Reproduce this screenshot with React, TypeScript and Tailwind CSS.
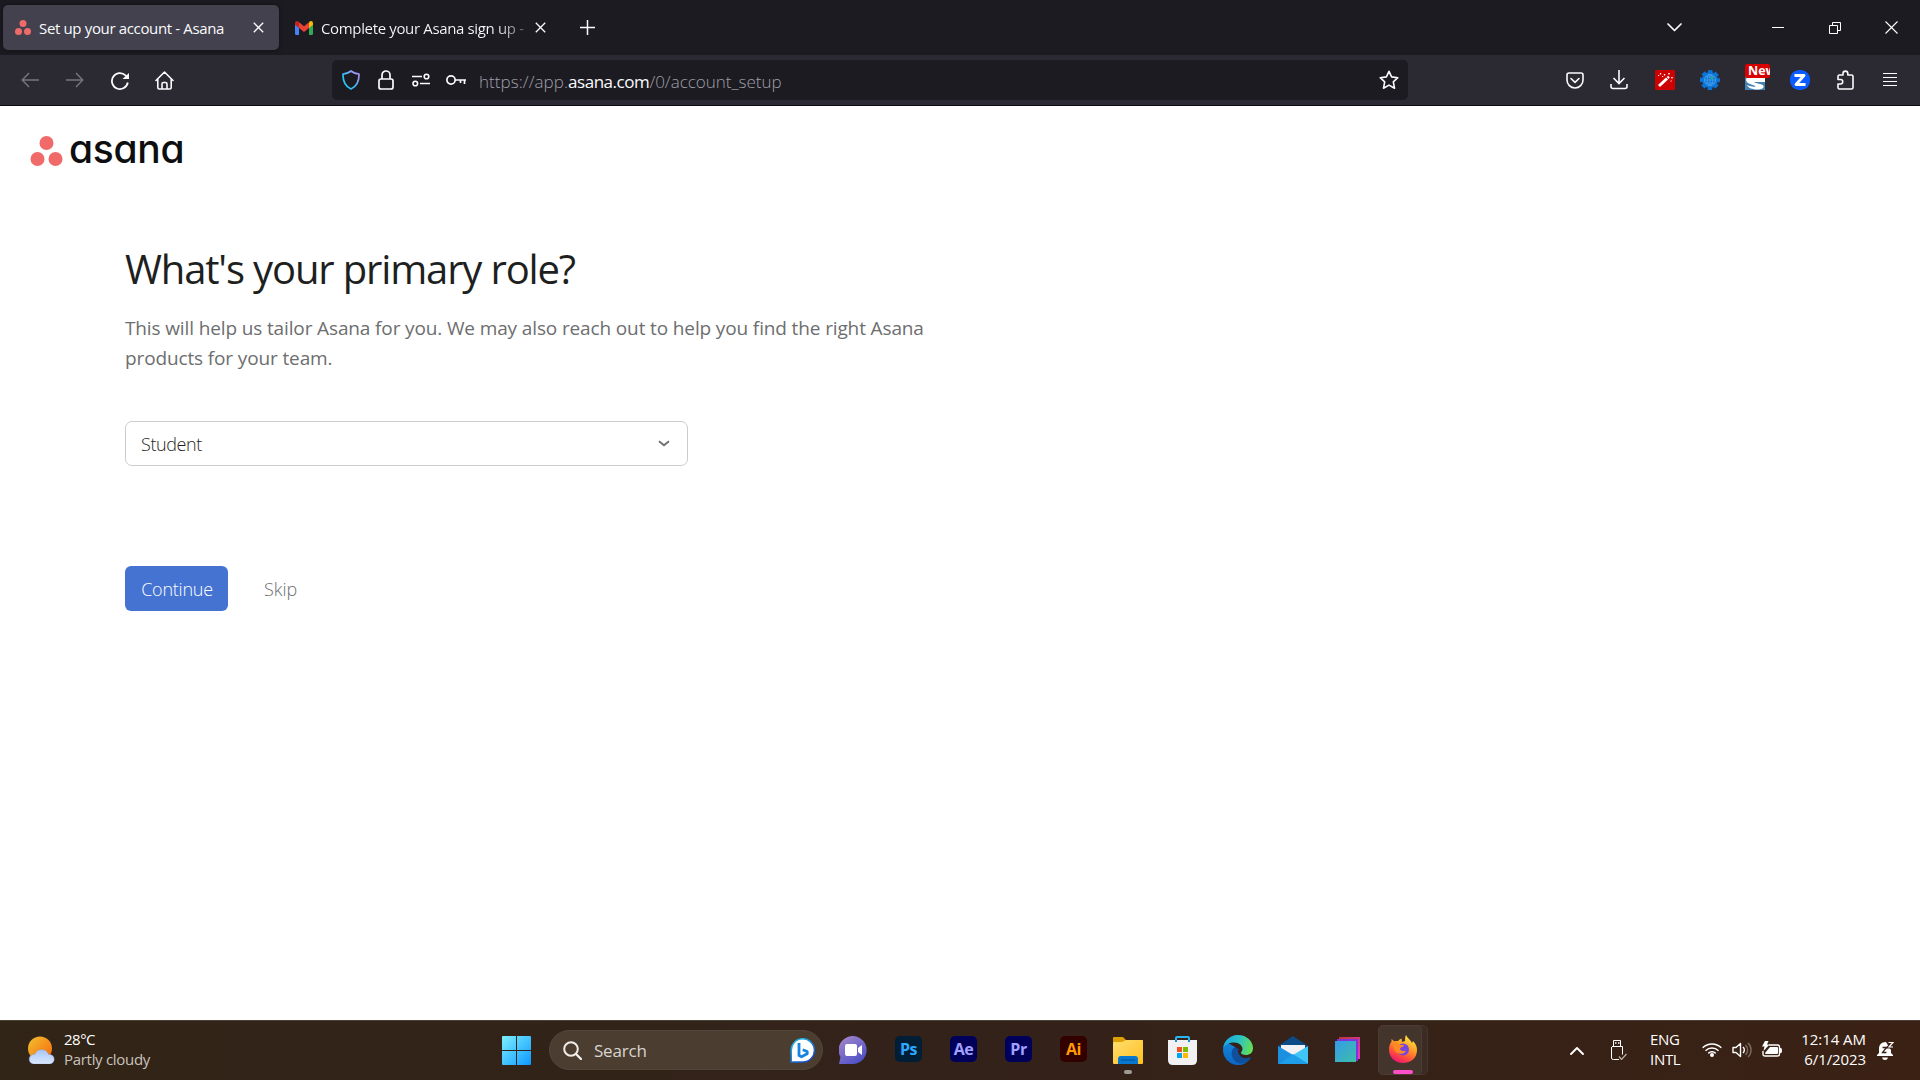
import React from "react";

type IconProps = { w: number; h: number; vb?: string; className?: string; children: React.ReactNode };

function Icon({ w, h, vb, className = "", children }: IconProps) {
  return (
    <svg width={w} height={h} viewBox={vb ?? `0 0 ${w} ${h}`} fill="none" className={`block shrink-0 ${className}`}>
      {children}
    </svg>
  );
}

function AsanaDots({ w, h }: { w: number; h: number }) {
  return (
    <Icon w={w} h={h} vb="0 0 32 30">
      <circle cx="16" cy="7" r="7" fill="#f06a6a" />
      <circle cx="7" cy="23" r="7" fill="#f06a6a" />
      <circle cx="25" cy="23" r="7" fill="#f06a6a" />
    </Icon>
  );
}

function CloseX() {
  return (
    <Icon w={11} h={11}>
      <path d="M.8.8l9.4 9.4M10.2.8L.8 10.2" stroke="#fbfbfe" strokeWidth="1.3" />
    </Icon>
  );
}

function TabStrip() {
  return (
    <div className="flex h-[55px] items-start bg-[#1c1b22] text-[#fbfbfe]">
      <div className="ml-[3px] mt-[5px] flex h-[45px] w-[276px] items-center rounded-[5px] bg-[#42414d] pl-3 pr-[15px] shadow-[0_0_4px_rgba(0,0,0,0.5)]">
        <AsanaDots w={16} h={15} />
        <span className="ml-2 mt-[2px] whitespace-nowrap text-[15px] tracking-[-0.35px]">Set up your account - Asana</span>
        <div className="ml-auto"><CloseX /></div>
      </div>
      <div className="mt-[5px] flex h-[45px] w-[267px] items-center pl-4">
        <Icon w={18} h={14}>
          <path d="M0 2v10.5Q0 14 1.500 14H4V6z" fill="#4285f4" />
          <path d="M18 2v10.500Q18 14 16.500 14H14V6z" fill="#34a853" />
          <path d="M4 1.300l5 4 5-4V7L9 11 4 7z" fill="#ea4335" />
          <path d="M0 2.200Q0 0 2 0q1 0 2 1.200V7L0 3.800z" fill="#c5221f" />
          <path d="M18 2.200Q18 0 16 0q-1 0-2 1.200V7l4-3.200z" fill="#fbbc04" />
        </Icon>
        <span className="ml-2 mt-[2px] w-[206px] overflow-hidden whitespace-nowrap bg-gradient-to-r from-[#fbfbfe] from-85% to-[#55545c] bg-clip-text text-[15px] tracking-[-0.35px] text-transparent">
          Complete your Asana sign up -
        </span>
        <div className="ml-2"><CloseX /></div>
      </div>
      <Icon w={15} h={15} className="ml-[34px] mt-5">
        <path d="M7.500 0v15M0 7.500h15" stroke="#fbfbfe" strokeWidth="1.500" />
      </Icon>
      <div className="ml-auto mr-[22px] flex h-[55px] items-center">
        <Icon w={15} h={9} className="mr-[90px]">
          <path d="M1 1l6.500 6.500L14 1" stroke="#fbfbfe" strokeWidth="1.700" strokeLinecap="round" strokeLinejoin="round" />
        </Icon>
        <div className="mr-[45px] h-px w-3 bg-white" />
        <Icon w={12} h={12} className="mr-11">
          <path d="M.5 3.500h8v8h-8zM3.500 3.500v-3h8v8h-3" stroke="#fff" />
        </Icon>
        <Icon w={13} h={13}>
          <path d="M.5.5l12 12M12.500.5l-12 12" stroke="#fff" strokeWidth="1.100" />
        </Icon>
      </div>
    </div>
  );
}

function Toolbar() {
  const s = "#fbfbfe";
  return (
    <div className="flex h-[51px] items-center border-b border-[#0c0c0d] bg-[#2b2a33]">
      <div className="flex w-[332px] items-center pl-[21px]">
        <Icon w={18} h={16}><path d="M18 8H1.500M8 1L1.200 8 8 15" stroke="#77767e" strokeWidth="1.400" /></Icon>
        <Icon w={18} h={16} className="ml-[27px]"><path d="M0 8h16.500M10 1l6.800 7-6.800 7" stroke="#77767e" strokeWidth="1.400" /></Icon>
        <Icon w={18} h={18} className="ml-[27px] mt-px">
          <path d="M16.800 10.500A8 8 0 1 1 14.500 3.300L16 5" stroke={s} strokeWidth="1.800" />
          <path d="M18 1v6h-6.500z" fill={s} />
        </Icon>
        <Icon w={19} h={19} className="ml-[26px]">
          <path d="M1 9.500L9.500 1 18 9.500M2.800 8v8.500q0 1.500 1.500 1.500h10.400q1.500 0 1.500-1.500V8M7 18v-5q0-1.500 1.500-1.500h2q1.500 0 1.500 1.500v5" stroke={s} strokeWidth="1.600" strokeLinecap="round" strokeLinejoin="round" />
        </Icon>
      </div>
      <div className="flex h-10 w-[1076px] items-center rounded-[5px] bg-[#1c1b22] pl-[10px] pr-[9px]">
        <Icon w={18} h={20}>
          <defs>
            <linearGradient id="shield" x1="0" y1="1" x2="1" y2="0"><stop offset=".35" stopColor="#26c5f5" /><stop offset=".9" stopColor="#aa90f0" /></linearGradient>
          </defs>
          <path d="M9 1c2 1.700 5 2.500 8 3 .2 7-2 12.500-8 15C3 16.500.8 11 1 4c3-.5 6-1.300 8-3z" stroke="url(#shield)" strokeWidth="1.700" strokeLinejoin="round" />
        </Icon>
        <Icon w={16} h={20} className="ml-[18px]">
          <rect x="1" y="9" width="14" height="10" rx="2" stroke={s} strokeWidth="1.700" />
          <path d="M4 9V5a4 4 0 0 1 8 0v4" stroke={s} strokeWidth="1.700" />
        </Icon>
        <Icon w={18} h={14} className="ml-[18px]">
          <path d="M0 3.500h10M8 10.500h10" stroke={s} strokeWidth="1.700" />
          <circle cx="14.500" cy="3.500" r="2.300" stroke={s} strokeWidth="1.600" />
          <circle cx="3.300" cy="10.500" r="2.300" stroke={s} strokeWidth="1.600" />
        </Icon>
        <Icon w={20} h={12} className="ml-4">
          <circle cx="5" cy="6" r="4.100" stroke={s} strokeWidth="1.700" />
          <path d="M9 6h11M18.500 6v4M14.500 6v3" stroke={s} strokeWidth="1.700" />
        </Icon>
        <span className="ml-[13px] mt-[3px] flex whitespace-nowrap text-[17px] font-light text-[#9f9fa6]">
          <span className="tracking-[0.05px]">https://app.</span>
          <span className="font-normal tracking-[-0.45px] text-[#fbfbfe]">asana.com</span>
          <span>/0/account_setup</span>
        </span>
        <Icon w={20} h={20} className="ml-auto">
          <path d="M10 1.300l2.600 5.600 6.200.8-4.500 4.200 1.200 6.300-5.500-3.100-5.500 3.100 1.200-6.300L1.200 7.700l6.200-.8z" stroke={s} strokeWidth="1.600" strokeLinejoin="round" />
        </Icon>
      </div>
      <div className="ml-auto mr-[22px] flex items-center">
        <Icon w={18} h={17}>
          <path d="M3 1h12q2 0 2 2v5a8 8 0 0 1-16 0V3q0-2 2-2z" stroke={s} strokeWidth="1.600" />
          <path d="M5 6.500l4 3.800 4-3.800" stroke={s} strokeWidth="1.600" strokeLinecap="round" strokeLinejoin="round" />
        </Icon>
        <Icon w={18} h={20} className="ml-[26px]">
          <path d="M9 0v13M3.500 8L9 13.500 14.500 8M1 14v2.500q0 2 2 2h12q2 0 2-2V14" stroke={s} strokeWidth="1.600" />
        </Icon>
        <Icon w={20} h={20} className="ml-[27px]">
          <rect width="20" height="20" rx="1" fill="#cf0000" />
          <path d="M4 16L12 8.500" stroke="#fff" strokeWidth="3" />
          <path d="M12.500 8l1.500-1.400" stroke="#fff" strokeWidth="2.400" />
          <path d="M5.500 3v1.500M4.800 3.700h1.500M9.500 4v1.500M8.800 4.700h1.500M14 3v1.500M13.200 3.700h1.500M17 7v1.500M16.200 7.700h1.500M3 5.500h1.200M15.500 11h1.200M7 6.500h1.200" stroke="#fff" strokeWidth=".9" />
        </Icon>
        <Icon w={20} h={20} className="ml-[25px]">
          <circle cx="10" cy="10" r="8" fill="#0b74d8" />
          <circle cx="10" cy="10" r="8.200" stroke="#0b74d8" strokeWidth="3.600" strokeDasharray="4.200 2.240" strokeDashoffset="2.100" />
          <circle cx="10" cy="10" r="5.500" stroke="#4aa3ec" strokeWidth=".9" />
          <path d="M4.500 10h11M10 4.500v11M5.500 7h9M5.500 13h9" stroke="#4aa3ec" strokeWidth=".7" />
          <ellipse cx="10" cy="10" rx="2.800" ry="5.500" stroke="#4aa3ec" strokeWidth=".7" />
          <circle cx="12" cy="8" r="1.200" fill="#23b65c" />
        </Icon>
        <div className="relative ml-[25px] h-[20px] w-5">
          <Icon w={20} h={20}>
            <rect width="20" height="20" fill="#4583b5" />
            <path d="M2 7h18v5H9c1 2 8 1 9.500 4 .7 2-2 3.500-6 3.500C8 19.500 3 18 2 15c3 1.500 7 2 8.500 1.500C11 15 2 15 1 10z" fill="#fff" />
          </Icon>
          <span className="absolute -top-[6px] left-0 h-[14px] w-[25px] overflow-hidden rounded-[2px] bg-[#d90000] pl-[3px] text-[12.500px] font-bold leading-[13px] text-white">New</span>
        </div>
        <span className="ml-[25px] flex h-5 w-5 items-center justify-center rounded-[9px] bg-[#0b5cff]">
          <Icon w={12} h={12}><path d="M.5 1.500h9.500L2 10.500h9.500" stroke="#fff" strokeWidth="2.800" strokeLinejoin="round" /></Icon>
        </span>
        <Icon w={17} h={20} className="ml-[27px]">
          <path d="M1 8V6.500q0-1.500 1.500-1.500H6V3.500a2.400 2.400 0 0 1 4.800 0V5H14.500q1.500 0 1.500 1.500v11q0 1.500-1.500 1.500h-12Q1 19 1 17.500V14h2.500a2 2 0 0 0 0-4.500H1z" stroke={s} strokeWidth="1.600" strokeLinejoin="round" />
        </Icon>
        <Icon w={16} h={14} className="ml-7">
          <path d="M1 .5h14M1 4.500h14M1 8.500h14M1 12.500h14" stroke={s} strokeWidth="1.100" />
        </Icon>
      </div>
    </div>
  );
}

function Setup() {
  return (
    <main className="flex h-[914px] flex-col bg-white">
      <div className="ml-[30px] mt-[30px] flex h-[30px] items-center">
        <AsanaDots w={33} h={30} />
        <span className="ml-[6px] mt-[-5px] text-[39px] font-medium leading-[39px] tracking-[-0.3px] text-[#0d0e10] [font-family:Inter,sans-serif] [font-feature-settings:'cv11']">asana</span>
      </div>
      <div className="ml-[125px] flex flex-col items-start">
        <h1 className="mt-[75px] h-14 whitespace-nowrap text-[40px] leading-[56px] tracking-[-1.15px] text-[#1e1f21]">What&apos;s your primary role?</h1>
        <p className="mt-[16px] whitespace-nowrap text-[19px] leading-[30px] tracking-[-0.13px] text-[#6d6e6f]">
          This will help us tailor Asana for you. We may also reach out to help you find the right Asana
          <br />
          products for your team.
        </p>
        <div className="mt-[48px] flex h-[45px] w-[563px] items-center justify-between rounded-[7px] border border-[#cfcbcb] pl-[15px] pr-[17px]">
          <span className="mt-[2px] text-[18px] font-light tracking-[-0.4px] text-[#1e1f21]">Student</span>
          <Icon w={12} h={7}><path d="M1 1.300l5 4 5-4" stroke="#6d6e6f" strokeWidth="1.800" /></Icon>
        </div>
        <div className="mt-[100px] flex h-[45px] items-center text-[18px] font-light">
          <button className="h-[45px] w-[103px] rounded-[6px] bg-[#4573d2] pl-px pt-[2px] tracking-[-0.25px] text-white">Continue</button>
          <button className="ml-9 pt-[2px] text-[#6d6e6f]">Skip</button>
        </div>
      </div>
    </main>
  );
}

function Adobe({ label, bg, fg, gap }: { label: string; bg: string; fg: string; gap: string }) {
  return (
    <span className={`-mt-[3px] flex h-[26px] w-[27px] items-center justify-center rounded-[5px] pb-px text-[16px] font-bold leading-none tracking-[-0.4px] ${bg} ${fg} ${gap}`}>{label}</span>
  );
}

function Taskbar() {
  return (
    <footer className="flex h-[60px] items-center border-t border-[#4a4238] bg-gradient-to-r from-[#312517] via-[#33221a] to-[#3a2114] text-white">
      <div className="flex w-[502px] items-center pl-[27px]">
        <Icon w={28} h={28} className="-mt-px">
          <defs>
            <linearGradient id="sun" x1="0" y1="0" x2="1" y2="1"><stop stopColor="#f3c130" /><stop offset="1" stopColor="#f5660b" /></linearGradient>
            <linearGradient id="cloud" x1="0" y1="0" x2="0" y2="1"><stop stopColor="#a7c6fa" /><stop offset="1" stopColor="#dce8fb" /></linearGradient>
          </defs>
          <circle cx="13" cy="12.500" r="12" fill="url(#sun)" />
          <path d="M7.500 28a4.800 4.800 0 1 1 .3-9.500 7.300 7.300 0 0 1 13.700 0A4.800 4.800 0 1 1 22.800 28z" fill="url(#cloud)" stroke="#86a8ed" strokeWidth=".4" />
        </Icon>
        <div className="-mt-1 ml-[9px] flex flex-col text-[15px] leading-5">
          <span className="tracking-[-0.5px]">28°C</span>
          <span className="tracking-[-0.3px] text-[#c9c3bd]">Partly cloudy</span>
        </div>
      </div>
      <Icon w={29} h={29}>
        <defs><linearGradient id="win" x1="0" y1="0" x2="1" y2="1"><stop stopColor="#7defff" /><stop offset="1" stopColor="#0b99ff" /></linearGradient></defs>
        <path d="M1 0h13v14H0V1q0-1 1-1zM15 0h13q1 0 1 1v13H15zM0 15h14v14H1q-1 0-1-1zM15 15h14v13q0 1-1 1H15z" fill="url(#win)" />
      </Icon>
      <div className="-mt-px ml-[18px] flex h-10 w-[274px] items-center rounded-full border border-[#52463a] bg-[#4b3e31] pl-[13px] pr-[7px]">
        <Icon w={19} h={19}>
          <circle cx="8" cy="8" r="6.800" stroke="#f1eeea" strokeWidth="2" />
          <path d="M13 13l5 5" stroke="#f1eeea" strokeWidth="2.400" strokeLinecap="round" />
        </Icon>
        <span className="ml-3 mt-px text-[17px] tracking-[-0.2px] text-[#d9d4cf]">Search</span>
        <Icon w={25} h={25} className="ml-auto">
          <defs><linearGradient id="bing" x1="0" y1="0" x2=".6" y2="1"><stop stopColor="#20c7e8" /><stop offset="1" stopColor="#1550d0" /></linearGradient></defs>
          <path d="M1.200 24V12.500A11.600 11.600 0 1 1 13 24z" fill="#fff" stroke="url(#bing)" strokeWidth="1.500" />
          <path d="M9 5v12.500l2.500 1.300 5.700-3v-2.300l-4.500-1.800" stroke="#1784e4" strokeWidth="2.800" strokeLinejoin="round" />
        </Icon>
      </div>
      <Icon w={29} h={28} className="-mt-px ml-[16px]">
        <defs><linearGradient id="chat" x1="0" y1="0" x2=".7" y2="1"><stop stopColor="#a98aca" /><stop offset="1" stopColor="#4d50c8" /></linearGradient></defs>
        <path d="M0 28l1.500-7A14 14 0 1 1 14.500 28z" fill="url(#chat)" />
        <rect x="6" y="8" width="12" height="12" rx="2" fill="#fff" />
        <path d="M19 12l4-3v10l-4-3z" fill="#fff" />
      </Icon>
      <Adobe label="Ps" bg="bg-[#001e36]" fg="text-[#31a8ff]" gap="ml-[27px]" />
      <Adobe label="Ae" bg="bg-[#00005b]" fg="text-[#a3a1ff]" gap="ml-[28px]" />
      <Adobe label="Pr" bg="bg-[#00005b]" fg="text-[#a3a1ff]" gap="ml-[28px]" />
      <Adobe label="Ai" bg="bg-[#330000]" fg="text-[#ff9a00]" gap="ml-[28px]" />
      <div className="relative ml-[26px]">
        <Icon w={30} h={27}>
          <defs><linearGradient id="fold" x1="0" y1="0" x2="1" y2="1"><stop stopColor="#ffdf70" /><stop offset="1" stopColor="#ffbf20" /></linearGradient></defs>
          <path d="M0 1q0-1 1-1h9l3 3h16q1 0 1 1v8H0z" fill="#dda000" />
          <path d="M0 7q0-2 1-2h8l4-2h16q1 0 1 1v22q0 1-1 1H1q-1 0-1-1z" fill="url(#fold)" />
          <path d="M5 27v-5q0-3 3-3h14q3 0 3 3v5z" fill="#0877cf" />
          <path d="M8 23h14" stroke="#04569a" strokeWidth="1.200" />
        </Icon>
        <span className="absolute left-[11px] top-[33px] h-1 w-2 rounded-full bg-[#a09a94]" />
      </div>
      <Icon w={29} h={29} className="ml-[25px]">
        <path d="M8 5V2q0-1 1-1h11q1 0 1 1v3" stroke="#28b5f0" strokeWidth="2" />
        <path d="M0 4h29v20q0 5-5 5H5q-5 0-5-5z" fill="#f1f1f3" />
        <path d="M8 4v2M21 4v2" stroke="#168bd0" strokeWidth="2" />
        <path d="M9 11h5v5H9z" fill="#f25022" /><path d="M15 11h5v5h-5z" fill="#7fba00" />
        <path d="M9 17h5v5H9z" fill="#00a4ef" /><path d="M15 17h5v5h-5z" fill="#ffb900" />
      </Icon>
      <Icon w={30} h={30} className="-mt-px ml-[26px]">
        <defs>
          <linearGradient id="edgeTop" x1="0" y1=".4" x2="1" y2=".6"><stop stopColor="#1aa7e0" /><stop offset=".5" stopColor="#2cc3c4" /><stop offset="1" stopColor="#66e04f" /></linearGradient>
          <linearGradient id="edgeBody" x1="0" y1="0" x2="0" y2="1"><stop stopColor="#1490df" /><stop offset="1" stopColor="#0c66c4" /></linearGradient>
        </defs>
        <path d="M15 0a15 15 0 1 0 12.500 23.300c-5 2-9.500 0-11.500-3.500L12 12l-7-4z" fill="url(#edgeBody)" />
        <path d="M11 12.500c-4 4-3 12 4 15.500 5 1.500 10-.8 12.500-4.700.5-1-.4-1.300-1-1-5 2-10 .5-11.500-4-.5-2 0-3.500 1-4.300z" fill="#104f9c" />
        <path d="M.2 13C1 5.500 7.500 0 15 0c9 0 15 6.500 15 13 0 5-3.500 7-7 7-3.500 0-5-1.300-5-2.300S19.500 16 19.500 14c0-3.500-3.500-6.500-8-6.500C6.500 7.500 2 9.500.2 13z" fill="url(#edgeTop)" />
      </Icon>
      <Icon w={30} h={28} className="-mt-px ml-[25px]">
        <path d="M0 10L15 0l15 10v4H0z" fill="#0a4a86" />
        <path d="M3 9h24v10H3z" fill="#f1f1f3" />
        <path d="M0 10l15 9-15 9z" fill="#1b8fe0" />
        <path d="M30 10l-15 9 15 9z" fill="#3fc5f6" />
        <path d="M0 28l15-10 15 10z" fill="#1e9de8" />
      </Icon>
      <Icon w={25} h={25} className="-mt-[3px] ml-[27px]">
        <defs>
          <linearGradient id="sq" x1="0" y1="0" x2="1" y2="1"><stop stopColor="#359be8" /><stop offset="1" stopColor="#3dbfa8" /></linearGradient>
          <linearGradient id="sqb" x1="0" y1="0" x2="1" y2="1"><stop stopColor="#bd3530" /><stop offset="1" stopColor="#e63ad0" /></linearGradient>
        </defs>
        <rect x="4" width="21" height="22" fill="url(#sqb)" />
        <rect x="2" y="2" width="21" height="22" fill="#7b35d8" />
        <rect y="4" width="21" height="21" fill="url(#sq)" />
      </Icon>
      <div className="-mt-px ml-[18px] h-[50px] w-[50px] rounded-[5px] border border-[#46362d] bg-[#3b2b22]">
        <div className="relative -ml-px -mt-px flex h-[50px] w-11 rounded-[5px] border border-[#4c3d34] bg-[#43342c] pl-[10px] pt-[9px]">
          <Icon w={28} h={28}>
            <defs>
              <linearGradient id="fox" x1=".8" y1="0" x2=".3" y2="1"><stop stopColor="#fff04a" /><stop offset=".4" stopColor="#ffa126" /><stop offset=".75" stopColor="#ff4a3e" /><stop offset="1" stopColor="#ec127a" /></linearGradient>
            </defs>
            <path d="M17 0c1 3 5 5 6 8l1-2c3 3 4 6 4 9 0 8-6 13-14 13S0 22 0 15c0-3 .5-6 2.500-8.500V4l3 2.500C7 6 8 6 9 6.200 10 4.500 11 4 12.500 3.500L13 7l3-1c0-2 0-4 1-6z" fill="url(#fox)" />
            <circle cx="14" cy="14.500" r="6" fill="#7546df" />
            <path d="M4 9c3-2 6-1 7 1h4c0 2-3 2-4 3.500 0 2 3 3.500 6 2-1 4-9 5-12-1z" fill="#ff8a22" />
          </Icon>
          <span className="absolute left-[14px] top-[44px] h-1 w-5 rounded-full bg-[#ff4fc8]" />
        </div>
      </div>
      <div className="ml-auto mr-[26px] flex items-center">
        <Icon w={14} h={9}><path d="M1 8l6-6 6 6" stroke="#fff" strokeWidth="1.900" strokeLinecap="round" strokeLinejoin="round" /></Icon>
        <Icon w={16} h={20} className="-mt-px ml-[27px]">
          <path d="M2.500.5h7v6h-7zM1 6.500h10.500v8M8 19.500H2.500Q.5 19.500.5 18V7" stroke="#fff" />
          <path d="M4 3h1.500M7 3h1.500" stroke="#fff" strokeWidth="1.300" />
          <path d="M8 16.500l2.500 3 5-5.500" stroke="#bbb2ab" strokeWidth="1.200" />
        </Icon>
        <div className="-mt-[3px] ml-[23px] flex w-[30px] flex-col text-[15px] leading-5">
          <span className="tracking-[-0.3px]">ENG</span><span className="tracking-[-0.3px]">INTL</span>
        </div>
        <Icon w={20} h={15} className="-mt-[3px] ml-[22px]">
          <path d="M.7 5.800a13.200 13.200 0 0 1 18.600 0M3.500 8.700a9.200 9.200 0 0 1 13 0M6.300 11.400a5.200 5.200 0 0 1 7.400 0" stroke="#fff" strokeWidth="1.500" />
          <circle cx="10" cy="13" r="2" fill="#fff" />
        </Icon>
        <Icon w={20} h={16} className="-mt-px ml-[10px]">
          <path d="M1 5.500h3L8.500 1.500v13L4 10.500H1z" stroke="#fff" strokeWidth="1.400" strokeLinejoin="round" />
          <path d="M11 5a4 4 0 0 1 0 6" stroke="#fff" strokeWidth="1.400" />
          <path d="M13.500 3a7 7 0 0 1 0 10M16 1a9.500 9.500 0 0 1 0 14" stroke="#7b6a60" strokeWidth="1.400" />
        </Icon>
        <Icon w={20} h={16} className="-mt-[3px] ml-[10px]">
          <path d="M7 4h8.500q2 0 2 2v7q0 2-2 2H3q-2 0-2-2v-3" stroke="#fff" strokeWidth="1.400" />
          <path d="M8 6h7q1 0 1 1v5q0 1-1 1H4q-1 0-1-1z" fill="#fff" />
          <path d="M18 7h1q1 0 1 2.500T19 12h-1z" fill="#fff" />
          <path d="M3 0h3.500L5 3.500h2.500L1.500 10l1-4.500H0z" fill="#fff" />
        </Icon>
        <div className="-mt-1 ml-[20px] flex w-[64px] flex-col items-end whitespace-nowrap text-[15px] leading-5">
          <span className="tracking-[-0.05px]">12:14 AM</span><span className="tracking-[-0.1px]">6/1/2023</span>
        </div>
        <Icon w={17} h={19} className="-mt-px ml-[11px]">
          <path d="M9 1C4 1 2 4 2 8v4l-2 2v1h16v-1l-2-2V9z" fill="#fff" />
          <path d="M5 16.500h6q-.5 2.500-3 2.500t-3-2.500z" fill="#fff" />
          <path d="M11 1h5l-4.500 5H16.500" stroke="#3a2114" strokeWidth="3" />
          <path d="M11.500 1.500h4.500l-4 4.500H16" stroke="#fff" strokeWidth="1.200" />
          <path d="M5.500 6.500h4l-4 5h4" stroke="#3a2114" strokeWidth="1.300" />
        </Icon>
      </div>
    </footer>
  );
}

export default function App() {
  return (
    <div className="flex h-[1080px] w-[1920px] flex-col overflow-hidden bg-white [font-family:'Open_Sans','Noto_Sans',sans-serif]">
      <TabStrip />
      <Toolbar />
      <Setup />
      <Taskbar />
    </div>
  );
}
